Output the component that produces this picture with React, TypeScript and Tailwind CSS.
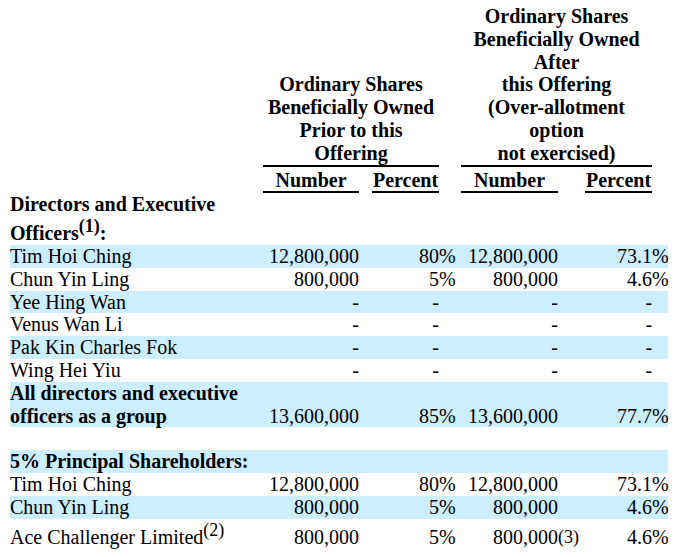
import React from "react";

type RowProps = {
  name: React.ReactNode;
  n1: string;
  p1: string;
  n2: string;
  note?: string;
  p2: string;
  shade?: boolean;
  bold?: boolean;
  tall?: boolean;
};

function DataRow({ name, n1, p1, n2, note, p2, shade, bold, tall }: RowProps) {
  const pad = tall ? "pt-[6px]" : "";
  return (
    <tr className={shade ? "bg-[#cceeff]" : ""}>
      <td className={`align-bottom ${pad} ${bold ? "font-bold" : ""}`}>{name}</td>
      <td className={`text-right align-bottom ${pad}`}>{n1}</td>
      <td className={pad}></td>
      <td className={`text-right align-bottom ${pad}`}>{p1}</td>
      <td className={`text-left align-bottom ${pad}`}>{p1 !== "-" && p1 !== "" ? "%" : ""}</td>
      <td className={`text-right align-bottom ${pad}`}>{n2}</td>
      <td className={`text-left align-bottom whitespace-nowrap ${pad}`}>
        {note ? <span className="text-[18px]">{note}</span> : null}
      </td>
      <td className={`text-right align-bottom ${pad}`}>{p2}</td>
      <td className={`text-left align-bottom ${pad}`}>{p2 !== "-" && p2 !== "" ? "%" : ""}</td>
    </tr>
  );
}

export default function App() {
  return (
    <div className="w-[676px] h-[557px] bg-white text-black [font-family:'Liberation_Serif','Times_New_Roman',serif] text-[20px] leading-[22.8px] overflow-hidden">
      <table className="ml-[10px] w-[658px] table-fixed border-separate border-spacing-0">
        <colgroup>
          <col className="w-[253px]" />
          <col className="w-[96px]" />
          <col className="w-[13px]" />
          <col className="w-[67px]" />
          <col className="w-[22px]" />
          <col className="w-[97px]" />
          <col className="w-[27px]" />
          <col className="w-[67px]" />
          <col className="w-[16px]" />
        </colgroup>
        <tbody>
          <tr>
            <td></td>
            <td colSpan={3} className="align-bottom text-center font-bold border-b-2 border-black">
              Ordinary Shares
              <br />
              Beneficially Owned
              <br />
              Prior to this
              <br />
              Offering
            </td>
            <td></td>
            <td colSpan={3} className="align-bottom text-center font-bold border-b-2 border-black pt-[5px]">
              Ordinary Shares
              <br />
              Beneficially Owned
              <br />
              After
              <br />
              this Offering
              <br />
              (Over-allotment
              <br />
              option
              <br />
              not exercised)
            </td>
            <td></td>
          </tr>
          <tr>
            <td></td>
            <td className="text-center font-bold pt-[2px] border-b-2 border-black">Number</td>
            <td></td>
            <td className="text-center font-bold pt-[2px] border-b-2 border-black">Percent</td>
            <td></td>
            <td className="text-center font-bold pt-[2px] border-b-2 border-black">Number</td>
            <td></td>
            <td className="text-center font-bold pt-[2px] border-b-2 border-black">Percent</td>
            <td></td>
          </tr>
          <tr>
            <td colSpan={9} className="font-bold">
              <div>Directors and Executive</div>
              <div className="pt-[6px]">
                Officers
                <sup className="text-[18px] top-[-8px]">(1)</sup>:
              </div>
            </td>
          </tr>
          <DataRow name="Tim Hoi Ching" n1="12,800,000" p1="80" n2="12,800,000" p2="73.1" shade />
          <DataRow name="Chun Yin Ling" n1="800,000" p1="5" n2="800,000" p2="4.6" />
          <DataRow name="Yee Hing Wan" n1="-" p1="-" n2="-" p2="-" shade />
          <DataRow name="Venus Wan Li" n1="-" p1="-" n2="-" p2="-" />
          <DataRow name="Pak Kin Charles Fok" n1="-" p1="-" n2="-" p2="-" shade />
          <DataRow name="Wing Hei Yiu" n1="-" p1="-" n2="-" p2="-" />
          <DataRow
            name="All directors and executive officers as a group"
            n1="13,600,000"
            p1="85"
            n2="13,600,000"
            p2="77.7"
            shade
            bold
          />
          <tr>
            <td colSpan={9}>&nbsp;</td>
          </tr>
          <tr className="bg-[#cceeff]">
            <td colSpan={9} className="font-bold">
              5% Principal Shareholders:
            </td>
          </tr>
          <DataRow name="Tim Hoi Ching" n1="12,800,000" p1="80" n2="12,800,000" p2="73.1" />
          <DataRow name="Chun Yin Ling" n1="800,000" p1="5" n2="800,000" p2="4.6" shade />
          <DataRow
            name={
              <>
                Ace Challenger Limited
                <sup className="text-[18px] top-[-8px]">(2)</sup>
              </>
            }
            n1="800,000"
            p1="5"
            n2="800,000"
            note="(3)"
            p2="4.6"
            tall
          />
        </tbody>
      </table>
    </div>
  );
}
